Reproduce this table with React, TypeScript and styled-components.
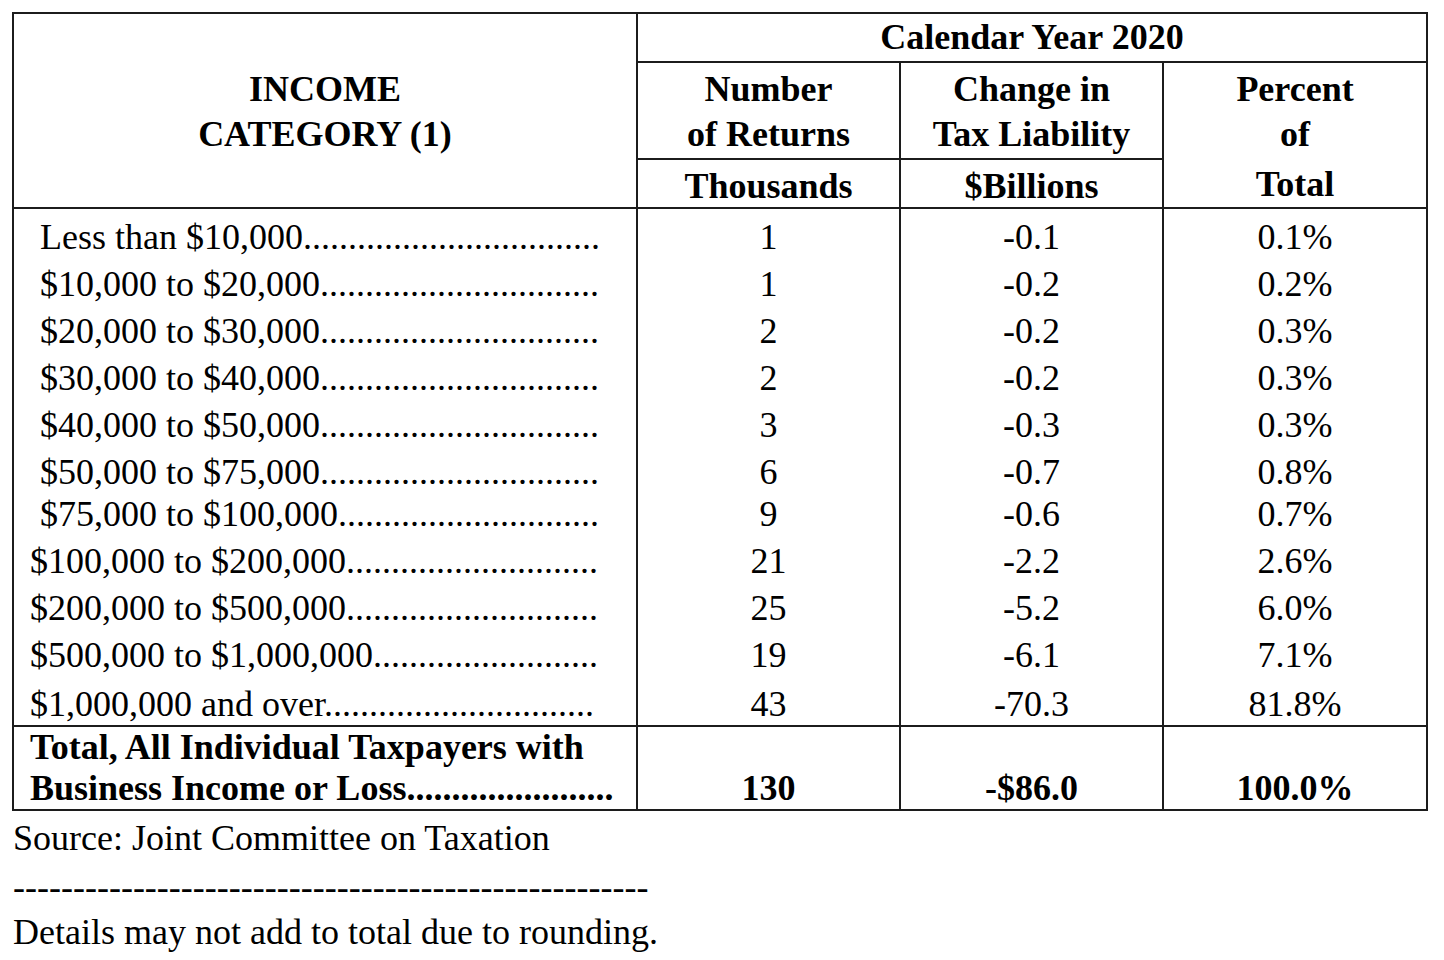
import React from "react";
import styled, { createGlobalStyle } from "styled-components";

const GlobalStyle = createGlobalStyle`
  html, body {
    margin: 0;
    padding: 0;
    background: #ffffff;
  }
  body {
    font-family: "Liberation Serif", "Times New Roman", serif;
    color: #000000;
  }
`;

const LINE = "#1c1c1c";

const Page = styled.main`
  width: 1444px;
  height: 960px;
  box-sizing: border-box;
  padding: 12px 0 0 12px;
  overflow: hidden;
`;

const Table = styled.table`
  border-collapse: collapse;
  table-layout: fixed;
  width: 1414px;
  font-size: 36px;
`;

const HeadCell = styled.th<{ $pt?: number; $lh?: number; $valign?: string }>`
  border: 2px solid ${LINE};
  font-weight: bold;
  text-align: center;
  vertical-align: ${(p) => p.$valign ?? "top"};
  padding: ${(p) => p.$pt ?? 0}px 0 0;
  line-height: ${(p) => p.$lh ?? 45}px;
  white-space: nowrap;
`;

const HeadLine = styled.span<{ $mt?: number }>`
  display: block;
  margin-top: ${(p) => p.$mt ?? 0}px;
`;

const LabelCell = styled.td<{ $indent: number; $pt: number; $lh: number; $pb: number }>`
  border-left: 2px solid ${LINE};
  border-right: 2px solid ${LINE};
  padding: ${(p) => p.$pt}px 0 ${(p) => p.$pb}px ${(p) => p.$indent}px;
  line-height: ${(p) => p.$lh}px;
  vertical-align: top;
  white-space: nowrap;
`;

const ValueCell = styled.td<{ $pt: number; $lh: number; $pb: number }>`
  border-left: 2px solid ${LINE};
  border-right: 2px solid ${LINE};
  padding: ${(p) => p.$pt}px 0 ${(p) => p.$pb}px;
  line-height: ${(p) => p.$lh}px;
  text-align: center;
  vertical-align: top;
  white-space: nowrap;
`;

const TotalLabel = styled.td`
  border: 2px solid ${LINE};
  padding: 0 0 0 16px;
  line-height: 41px;
  font-weight: bold;
  vertical-align: top;
  white-space: nowrap;
`;

const TotalValue = styled.td`
  border: 2px solid ${LINE};
  padding: 0;
  line-height: 41px;
  font-weight: bold;
  text-align: center;
  vertical-align: bottom;
  white-space: nowrap;
`;

const Footer = styled.div`
  padding: 4px 0 0 1px;
  font-size: 36px;
  line-height: 47px;
  white-space: nowrap;
`;

const FootLine = styled.div<{ $shift?: number }>`
  position: relative;
  top: ${(p) => p.$shift ?? 0}px;
`;

type Row = {
  label: string;
  dots: number;
  returns: string;
  change: string;
  pct: string;
  indent: number;
  pt: number;
  lh: number;
  pb: number;
};

const rows: Row[] = [
  { label: "Less than $10,000", dots: 33, returns: "1", change: "-0.1", pct: "0.1%", indent: 26, pt: 5, lh: 47, pb: 0 },
  { label: "$10,000 to $20,000", dots: 31, returns: "1", change: "-0.2", pct: "0.2%", indent: 26, pt: 0, lh: 47, pb: 0 },
  { label: "$20,000 to $30,000", dots: 31, returns: "2", change: "-0.2", pct: "0.3%", indent: 26, pt: 0, lh: 47, pb: 0 },
  { label: "$30,000 to $40,000", dots: 31, returns: "2", change: "-0.2", pct: "0.3%", indent: 26, pt: 0, lh: 47, pb: 0 },
  { label: "$40,000 to $50,000", dots: 31, returns: "3", change: "-0.3", pct: "0.3%", indent: 26, pt: 0, lh: 47, pb: 0 },
  { label: "$50,000 to $75,000", dots: 31, returns: "6", change: "-0.7", pct: "0.8%", indent: 26, pt: 0, lh: 47, pb: 0 },
  { label: "$75,000 to $100,000", dots: 29, returns: "9", change: "-0.6", pct: "0.7%", indent: 26, pt: 0, lh: 36, pb: 6 },
  { label: "$100,000 to $200,000", dots: 28, returns: "21", change: "-2.2", pct: "2.6%", indent: 16, pt: 0, lh: 47, pb: 0 },
  { label: "$200,000 to $500,000", dots: 28, returns: "25", change: "-5.2", pct: "6.0%", indent: 16, pt: 0, lh: 47, pb: 0 },
  { label: "$500,000 to $1,000,000", dots: 25, returns: "19", change: "-6.1", pct: "7.1%", indent: 16, pt: 0, lh: 47, pb: 0 },
  { label: "$1,000,000 and over", dots: 30, returns: "43", change: "-70.3", pct: "81.8%", indent: 16, pt: 5, lh: 41, pb: 0 },
];

export default function App() {
  return (
    <>
      <GlobalStyle />
      <Page>
        <Table>
          <colgroup>
            <col style={{ width: 624 }} />
            <col style={{ width: 263 }} />
            <col style={{ width: 263 }} />
            <col style={{ width: 264 }} />
          </colgroup>
          <thead>
            <tr>
              <HeadCell rowSpan={3} $valign="middle" $pt={3}>
                <HeadLine>INCOME</HeadLine>
                <HeadLine>CATEGORY (1)</HeadLine>
              </HeadCell>
              <HeadCell colSpan={3} $lh={47}>
                Calendar Year 2020
              </HeadCell>
            </tr>
            <tr>
              <HeadCell $pt={4}>
                <HeadLine>Number</HeadLine>
                <HeadLine>of Returns</HeadLine>
              </HeadCell>
              <HeadCell $pt={4}>
                <HeadLine>Change in</HeadLine>
                <HeadLine>Tax Liability</HeadLine>
              </HeadCell>
              <HeadCell rowSpan={2} $pt={4}>
                <HeadLine>Percent</HeadLine>
                <HeadLine>of</HeadLine>
                <HeadLine $mt={5}>Total</HeadLine>
              </HeadCell>
            </tr>
            <tr>
              <HeadCell $pt={5} $lh={42}>Thousands</HeadCell>
              <HeadCell $pt={5} $lh={42}>$Billions</HeadCell>
            </tr>
          </thead>
          <tbody>
            {rows.map((r) => (
              <tr key={r.label}>
                <LabelCell $indent={r.indent} $pt={r.pt} $lh={r.lh} $pb={r.pb}>
                  {r.label + ".".repeat(r.dots)}
                </LabelCell>
                <ValueCell $pt={r.pt} $lh={r.lh} $pb={r.pb}>
                  {r.returns}
                </ValueCell>
                <ValueCell $pt={r.pt} $lh={r.lh} $pb={r.pb}>
                  {r.change}
                </ValueCell>
                <ValueCell $pt={r.pt} $lh={r.lh} $pb={r.pb}>
                  {r.pct}
                </ValueCell>
              </tr>
            ))}
            <tr>
              <TotalLabel>
                <div>Total, All Individual Taxpayers with</div>
                <div>{"Business Income or Loss" + ".".repeat(23)}</div>
              </TotalLabel>
              <TotalValue>130</TotalValue>
              <TotalValue>-$86.0</TotalValue>
              <TotalValue>100.0%</TotalValue>
            </tr>
          </tbody>
        </Table>
        <Footer>
          <FootLine>Source: Joint Committee on Taxation</FootLine>
          <FootLine $shift={2}>{"-".repeat(53)}</FootLine>
          <FootLine>Details may not add to total due to rounding.</FootLine>
        </Footer>
      </Page>
    </>
  );
}
